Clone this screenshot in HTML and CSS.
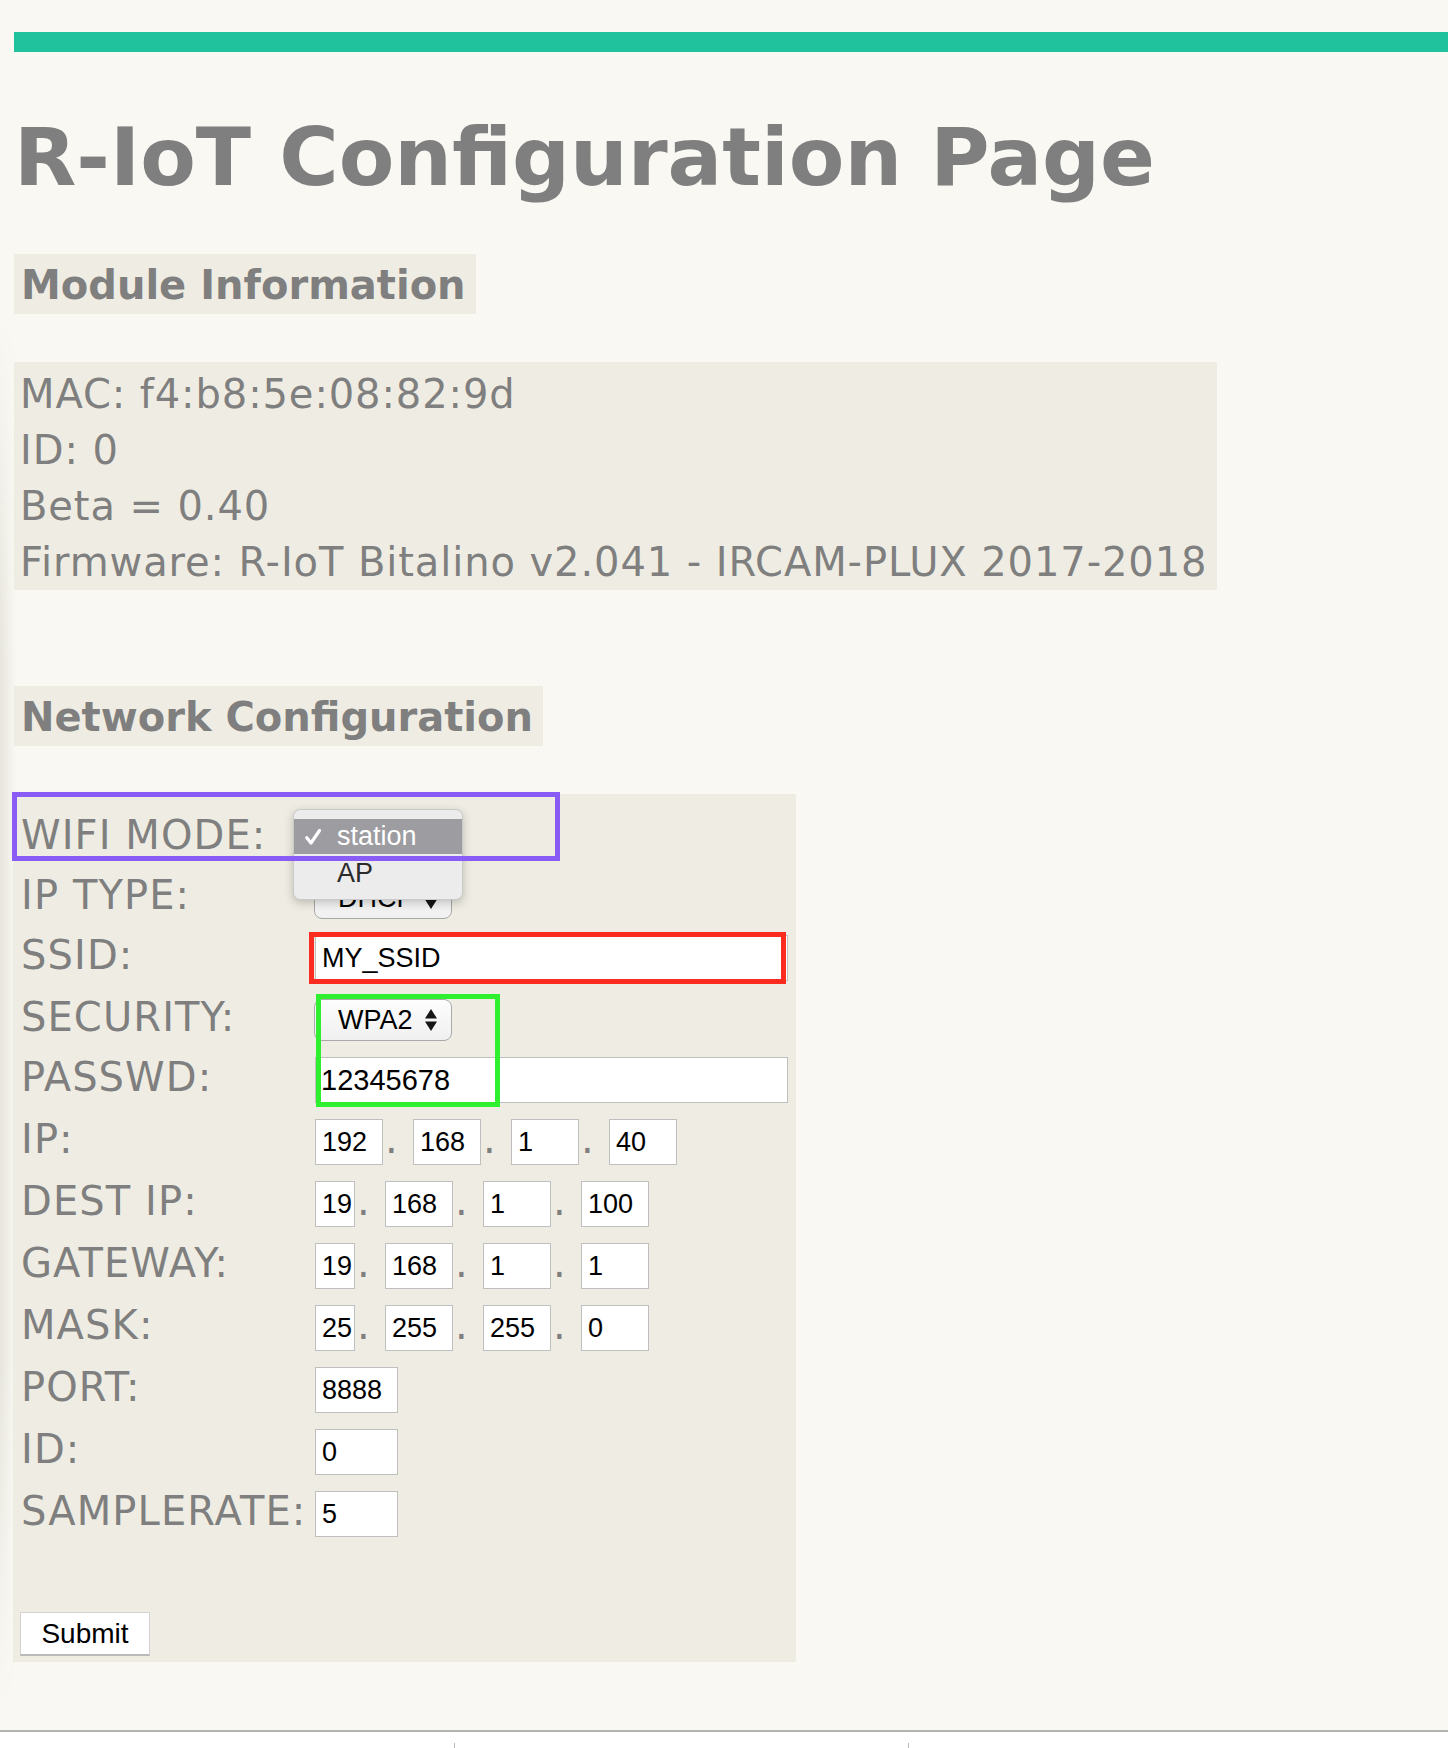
FILE: index.html
```html
<!DOCTYPE html>
<html lang="en">
<head>
<meta charset="utf-8">
<title>R-IoT Configuration Page</title>
<link rel="stylesheet" href="styles.css">
</head>
<body>
<div class="edge-shade"></div>
<div class="page">
  <div class="topbar"></div>
  <h1 class="title">R-IoT Configuration Page</h1>

  <h2 class="section">Module Information</h2>
  <div class="info">
    <div>MAC: f4:b8:5e:08:82:9d</div>
    <div>ID: 0</div>
    <div>Beta = 0.40</div>
    <div>Firmware: R-IoT Bitalino v2.041 - IRCAM-PLUX 2017-2018</div>
  </div>

  <h2 class="section net">Network Configuration</h2>

  <form class="netform">
    <div class="row r60">
      <label class="label">WIFI MODE:</label>
      <span class="sel">
        <select><option>station</option><option>AP</option></select>
        <svg class="arrows" viewBox="0 0 12 22" width="12" height="22"><polygon points="6,0 12,9.5 0,9.5"/><polygon points="0,12.5 12,12.5 6,22"/></svg>
      </span>
    </div>
    <div class="row r60">
      <label class="label">IP TYPE:</label>
      <span class="sel">
        <select><option>DHCP</option><option>STATIC</option></select>
        <svg class="arrows" viewBox="0 0 12 22" width="12" height="22"><polygon points="6,0 12,9.5 0,9.5"/><polygon points="0,12.5 12,12.5 6,22"/></svg>
      </span>
    </div>
    <div class="row r62">
      <label class="label">SSID:</label>
      <input class="inp wide" type="text" value="MY_SSID">
    </div>
    <div class="row r60">
      <label class="label">SECURITY:</label>
      <span class="sel">
        <select><option>WPA2</option><option>OPEN</option></select>
        <svg class="arrows" viewBox="0 0 12 22" width="12" height="22"><polygon points="6,0 12,9.5 0,9.5"/><polygon points="0,12.5 12,12.5 6,22"/></svg>
      </span>
    </div>
    <div class="row r62">
      <label class="label">PASSWD:</label>
      <input class="inp wide big" type="text" value="12345678">
    </div>
    <div class="row r62">
      <label class="label">IP:</label>
      <div class="ipgroup">
        <input class="inp ip" type="text" value="192"><span class="dot">.</span><input class="inp ip" type="text" value="168"><span class="dot">.</span><input class="inp ip" type="text" value="1"><span class="dot">.</span><input class="inp ip" type="text" value="40">
      </div>
    </div>
    <div class="row r62">
      <label class="label">DEST IP:</label>
      <div class="ipgroup">
        <input class="inp ip narrow" type="text" value="192"><span class="dot">.</span><input class="inp ip" type="text" value="168"><span class="dot">.</span><input class="inp ip" type="text" value="1"><span class="dot">.</span><input class="inp ip" type="text" value="100">
      </div>
    </div>
    <div class="row r62">
      <label class="label">GATEWAY:</label>
      <div class="ipgroup">
        <input class="inp ip narrow" type="text" value="192"><span class="dot">.</span><input class="inp ip" type="text" value="168"><span class="dot">.</span><input class="inp ip" type="text" value="1"><span class="dot">.</span><input class="inp ip" type="text" value="1">
      </div>
    </div>
    <div class="row r62">
      <label class="label">MASK:</label>
      <div class="ipgroup">
        <input class="inp ip narrow" type="text" value="255"><span class="dot">.</span><input class="inp ip" type="text" value="255"><span class="dot">.</span><input class="inp ip" type="text" value="255"><span class="dot">.</span><input class="inp ip" type="text" value="0">
      </div>
    </div>
    <div class="row r62">
      <label class="label">PORT:</label>
      <input class="inp short" type="text" value="8888">
    </div>
    <div class="row r62">
      <label class="label">ID:</label>
      <input class="inp short" type="text" value="0">
    </div>
    <div class="row r62">
      <label class="label">SAMPLERATE:</label>
      <input class="inp short" type="text" value="5">
    </div>

    <div class="submitrow"><button class="submit" type="button">Submit</button></div>

    <div class="menu">
      <div class="menu-item selected">
        <svg class="check" viewBox="0 0 16 16" width="16" height="16"><path d="M1.8 8.8 L6 14 L14.5 1.5"/></svg>
        <span>station</span>
      </div>
      <div class="menu-item"><span class="nocheck"></span><span>AP</span></div>
    </div>
    <div class="mark purple"></div>
    <div class="mark red"></div>
    <div class="mark green"></div>
  </form>
</div>
<div class="browserbar"><span class="tick"></span><span class="tick"></span></div>
</body>
</html>
```

FILE: styles.css
```css
html, body {
  background: #f9f8f3;
}
body {
  margin: 0;
  font-family: "DejaVu Sans", Verdana, sans-serif;
  color: #7f7f7f;
}

.edge-shade {
  position: absolute;
  left: 0;
  top: 320px;
  width: 16px;
  height: 1380px;
  background: linear-gradient(to right, rgba(110, 100, 70, 0.13), rgba(110, 100, 70, 0));
  -webkit-mask-image: linear-gradient(to bottom, transparent, #000 25%, #000 75%, transparent);
  mask-image: linear-gradient(to bottom, transparent, #000 25%, #000 75%, transparent);
  pointer-events: none;
}

.page {
  padding: 32px 0 0 14px;
}

.topbar {
  height: 20px;
  background: #20c19d;
}

.title {
  margin: 58px 0 0 0;
  font-size: 81px;
  line-height: 94px;
  font-weight: bold;
  color: #7f7f7f;
}

.section {
  width: fit-content;
  margin: 50px 0 0 0;
  padding: 8px 10px 5px 7px;
  background: #efede3;
  font-size: 40px;
  line-height: 47px;
  font-weight: bold;
  color: #7f7f7f;
}
.section.net {
  margin-top: 96px;
}

.info {
  width: fit-content;
  margin-top: 48px;
  padding: 4px 10px 0 6px;
  background: #efede3;
  font-size: 40px;
  line-height: 56px;
  letter-spacing: 0.9px;
}

.netform {
  position: relative;
  width: fit-content;
  margin: 48px 0 0 -1px;
  padding: 13px 8px 6px 8px;
  background: #efede3;
}

.row {
  display: flex;
  align-items: flex-start;
}
.r60 { height: 60px; }
.r62 { height: 62px; }

.label {
  flex: 0 0 294px;
  padding-top: 5px;
  font-size: 40px;
  line-height: 46px;
  letter-spacing: 1.1px;
  white-space: nowrap;
  color: #7f7f7f;
}

.inp {
  box-sizing: border-box;
  height: 46px;
  margin: 8px 0 0 0;
  padding: 0 2px 0 6px;
  border: 1px solid #bfbfbf;
  background: #fff;
  font-family: "Liberation Sans", Arial, sans-serif;
  font-size: 27px;
  color: #000;
  outline: none;
}
.inp.wide { width: 473px; }
.inp.big { font-size: 29px; padding-left: 5px; }
.inp.short { width: 83px; }
.inp.ip { width: 68px; }
.inp.ip.narrow { width: 40px; }

.ipgroup {
  display: flex;
  align-items: flex-start;
}
.dot {
  box-sizing: border-box;
  width: 30px;
  padding: 5px 0 0 2px;
  font-size: 40px;
  line-height: 46px;
  color: #7f7f7f;
}

.sel {
  position: relative;
  display: inline-block;
  margin-top: 10px;
  margin-left: -1px;
}
.sel select {
  -webkit-appearance: none;
  appearance: none;
  box-sizing: border-box;
  width: 138px;
  height: 42px;
  padding: 0 0 0 23px;
  border: 1px solid #a9a9a9;
  border-radius: 8px;
  background: linear-gradient(#fdfdfd, #f0f0f0);
  font-family: "Liberation Sans", Arial, sans-serif;
  font-size: 27px;
  color: #000;
  outline: none;
}
.sel .arrows {
  position: absolute;
  right: 15px;
  top: 10px;
  fill: #161616;
}

.submitrow {
  margin-top: 67px;
}
.submit {
  box-sizing: border-box;
  width: 130px;
  height: 44px;
  margin-left: -1px;
  padding: 0;
  border: 1px solid #d2d2d2;
  border-bottom: 2px solid #b9b9b9;
  background: #fff;
  font-family: "Liberation Sans", Arial, sans-serif;
  font-size: 28px;
  color: #000;
}

/* dropdown menu open over the WIFI MODE select */
.menu {
  position: absolute;
  left: 280px;
  top: 15px;
  box-sizing: border-box;
  width: 170px;
  height: 91px;
  padding-top: 9px;
  border: 1px solid rgba(0, 0, 0, 0.14);
  border-radius: 7px;
  background: #ececec;
  box-shadow: 0 3px 10px rgba(0, 0, 0, 0.22);
  font-family: "Liberation Sans", Arial, sans-serif;
  font-size: 27px;
}
.menu-item {
  display: flex;
  align-items: center;
  height: 35px;
  padding-left: 11px;
  color: #2b2b2b;
}
.menu-item.selected {
  background: #9d9ca1;
  color: #fff;
  margin-bottom: 2px;
}
.check {
  width: 16px;
  height: 16px;
  margin-right: 16px;
  fill: none;
  stroke: #fff;
  stroke-width: 3.2;
  stroke-linecap: round;
  stroke-linejoin: round;
}
.nocheck {
  width: 32px;
}

/* annotation rectangles drawn over the screenshot */
.mark {
  position: absolute;
  box-sizing: border-box;
  border: 5px solid;
  pointer-events: none;
}
.mark.purple {
  left: -1px;
  top: -2px;
  width: 548px;
  height: 69px;
  border-color: #8a5cf6;
}
.mark.red {
  left: 296px;
  top: 138px;
  width: 477px;
  height: 52px;
  border-color: #fb2b1f;
}
.mark.green {
  left: 303px;
  top: 200px;
  width: 184px;
  height: 113px;
  border-color: #2ff02f;
}

.browserbar {
  display: flex;
  align-items: flex-end;
  height: 16px;
  margin-top: 68px;
  border-top: 2px solid #b3b3b3;
  background: #fff;
}
.tick {
  width: 1px;
  height: 5px;
  margin-left: 453px;
  background: #b9b9b9;
}
.tick:first-child {
  margin-left: 454px;
}
```
